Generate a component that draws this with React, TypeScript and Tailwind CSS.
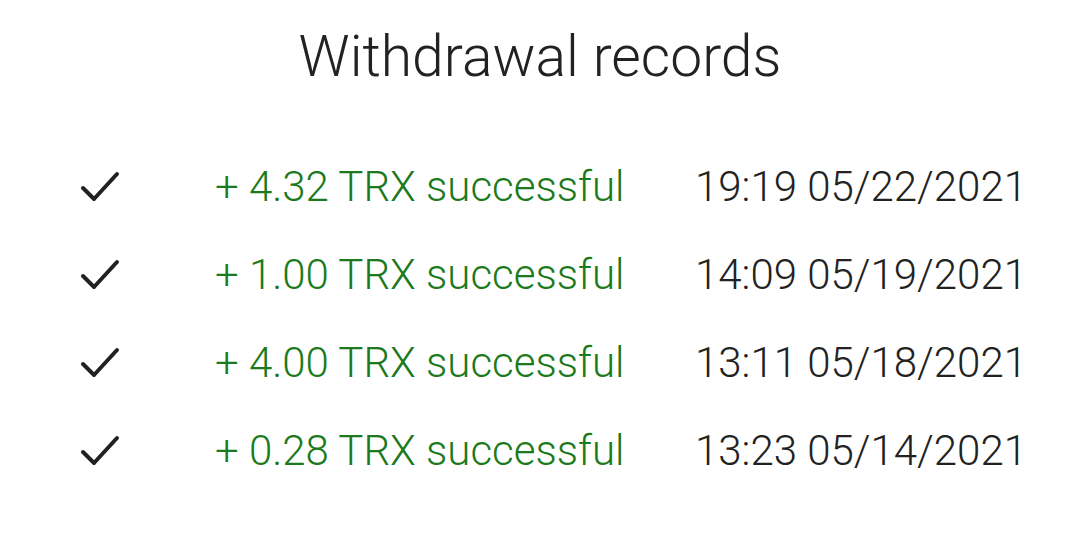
import type { FC } from "react";

const records = [
	{ amount: "4.32", time: "19:19 05/22/2021" },
	{ amount: "1.00", time: "14:09 05/19/2021" },
	{ amount: "4.00", time: "13:11 05/18/2021" },
	{ amount: "0.28", time: "13:23 05/14/2021" },
];

const Check: FC = () => (
	<svg width="40" height="32" viewBox="0 0 40 32" fill="none" className="text-[#222]">
		<path d="M3 17 L14 28 L37 3" stroke="currentColor" strokeWidth="4" strokeLinecap="round" strokeLinejoin="round" />
	</svg>
);

export default function App() {
	return (
		<div className="h-[547px] w-[1080px] bg-white font-['Roboto',sans-serif] font-light">
			<h1 className="pt-[28px] text-center text-[57px] leading-none text-[#222]">Withdrawal records</h1>
			<ul className="mt-[58px] flex flex-col">
				{records.map((r) => (
					<li key={r.time} className="flex h-[88px] items-center text-[42px] leading-[88px]">
						<div className="ml-[80px] flex w-[135px] items-center">
							<Check />
						</div>
						<span className="w-[480px] text-[#1b7a1b]">+ {r.amount} TRX successful</span>
						<span className="text-[#222]">{r.time}</span>
					</li>
				))}
			</ul>
		</div>
	);
}
